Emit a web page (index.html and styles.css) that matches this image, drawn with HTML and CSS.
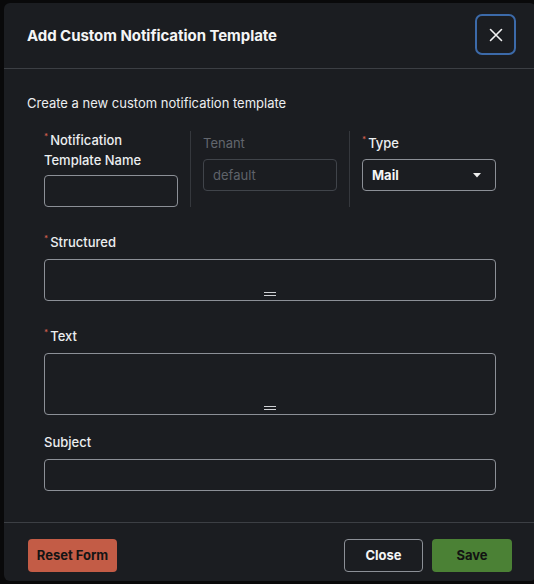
FILE: index.html
```html
<!DOCTYPE html>
<html>
<head>
<meta charset="utf-8">
<link rel="stylesheet" href="styles.css">
</head>
<body>
<div class="modal">
  <div class="header">
    <h2 class="title">Add Custom Notification Template</h2>
    <button class="x-btn" aria-label="Close">
      <svg width="14" height="14" viewBox="0 0 14 14"><path d="M1.5 1.5 L12.5 12.5 M12.5 1.5 L1.5 12.5" stroke="#f2f2f2" stroke-width="1.6" stroke-linecap="round" fill="none"/></svg>
    </button>
  </div>
  <div class="body">
    <p class="intro">Create a new custom notification template</p>
    <div class="row3">
      <div class="col col1">
        <label class="lbl"><span class="req">*</span>Notification Template Name</label>
        <div class="input"></div>
      </div>
      <div class="col col2">
        <label class="lbl dim">Tenant</label>
        <div class="input disabled">default</div>
      </div>
      <div class="col col3">
        <label class="lbl"><span class="req">*</span>Type</label>
        <div class="input select"><span>Mail</span><svg width="8" height="5" viewBox="0 0 8 5"><path d="M0 0 H8 L4 4.5 Z" fill="#eeeeee"/></svg></div>
      </div>
    </div>
    <div class="field f-structured">
      <label class="lbl"><span class="req">*</span>Structured</label>
      <div class="textarea ta-small"><span class="grip"></span></div>
    </div>
    <div class="field f-text">
      <label class="lbl"><span class="req">*</span>Text</label>
      <div class="textarea ta-large"><span class="grip"></span></div>
    </div>
    <div class="field f-subject">
      <label class="lbl">Subject</label>
      <div class="input"></div>
    </div>
  </div>
  <div class="footer">
    <button class="btn reset">Reset Form</button>
    <div class="right">
      <button class="btn close">Close</button>
      <button class="btn save">Save</button>
    </div>
  </div>
</div>
</body>
</html>
```

FILE: styles.css
```css
html, body {
  margin: 0;
  padding: 0;
  background: #09090a;
  overflow: hidden;
  height: 584px;
}
body {
  font-family: Inter, "Noto Sans", sans-serif;
  color: #eceef0;
}
.modal {
  margin: 3px 0 0 4px;
  width: 532px;
  height: 578px;
  background: #1b1d21;
  border-radius: 6px;
  display: flex;
  flex-direction: column;
}
.header {
  height: 65px;
  border-bottom: 1px solid #3c3f44;
  display: flex;
  align-items: center;
  justify-content: space-between;
  padding: 0 20px 0 23px;
}
.title {
  margin: 0;
  font-size: 15px;
  font-weight: 700;
  letter-spacing: -0.05px;
  color: #f4f5f6;
  padding-bottom: 1px;
}
.x-btn {
  width: 41px;
  height: 41px;
  box-sizing: border-box;
  border: 2px solid #3c6aa9;
  border-radius: 7px;
  background: #1b1d21;
  display: flex;
  align-items: center;
  justify-content: center;
  padding: 0;
  margin-top: -2px;
}
.body {
  padding: 24px 40px 0 40px;
  flex: 1;
}
.intro {
  margin: 0 0 0 -17px;
  font-size: 13px;
  line-height: 20px;
  color: #eceef0;
}
.row3 {
  display: grid;
  grid-template-columns: 146px 159px 147px;
  margin-top: 18px;
  height: 76px;
}
.col {
  display: flex;
  flex-direction: column;
}
.col1 {
  padding-right: 12px;
}
.col2, .col3 {
  border-left: 1px solid #35383d;
  padding-left: 12px;
}
.col2 {
  padding-right: 12px;
}
.col2 .lbl, .col3 .lbl {
  margin-top: 2px;
  margin-bottom: 6px;
}
.col1 .lbl {
  margin-top: -1px;
  margin-bottom: 5px;
}
.lbl {
  display: block;
  font-size: 13px;
  line-height: 20px;
  color: #eceef0;
  font-weight: 500;
}
.lbl.dim {
  color: #62666d;
  font-weight: 400;
}
.req {
  color: #d2604f;
  font-size: 8px;
  vertical-align: top;
  line-height: 12px;
  margin-right: 2px;
}
.input {
  box-sizing: border-box;
  height: 32px;
  border: 1px solid #8c9097;
  border-radius: 4px;
  font-size: 13px;
  display: flex;
  align-items: center;
  padding: 0 9px;
}
.input.disabled {
  border-color: #40444a;
  color: #5f636a;
}
.select {
  justify-content: space-between;
  font-weight: 700;
  color: #f4f5f6;
  padding-right: 14px;
}
.field .lbl {
  margin-bottom: 7px;
}
.f-structured { margin-top: 25px; }
.f-text { margin-top: 25px; }
.f-subject { margin-top: 17px; }
.textarea {
  box-sizing: border-box;
  border: 1px solid #8c9097;
  border-radius: 4px;
  position: relative;
}
.ta-small { height: 42px; }
.ta-large { height: 62px; }
.grip {
  position: absolute;
  left: 219px;
  bottom: 4px;
  width: 12px;
  height: 4px;
  border-top: 1px solid #d0d2d5;
  border-bottom: 1px solid #d0d2d5;
  box-sizing: border-box;
}
.footer {
  border-top: 1px solid #3c3f44;
  height: 59px;
  display: flex;
  align-items: flex-start;
  justify-content: space-between;
  padding: 16px 24px 0 24px;
  box-sizing: border-box;
}
.right {
  display: flex;
  gap: 9px;
}
.btn {
  height: 33px;
  border-radius: 4px;
  font-family: Inter, "Noto Sans", sans-serif;
  font-size: 13px;
  font-weight: 700;
  box-sizing: border-box;
  padding: 0 0 2px 0;
}
.reset {
  width: 89px;
  background: #c35c46;
  border: none;
  color: #141414;
}
.close {
  width: 79px;
  background: transparent;
  border: 1px solid #8c9097;
  color: #f4f5f6;
}
.save {
  width: 80px;
  background: #4b8135;
  border: none;
  color: #121212;
}
```
